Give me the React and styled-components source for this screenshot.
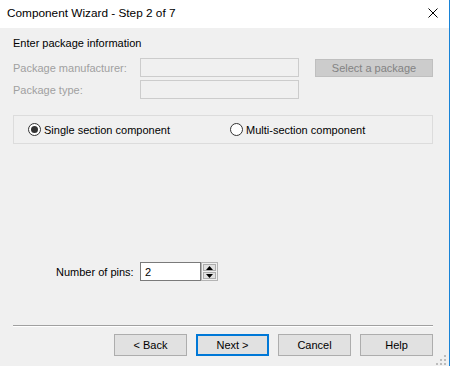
import React, { useState } from 'react'
import styled, { createGlobalStyle } from 'styled-components'

const GlobalStyle = createGlobalStyle`
    html, body {
        margin: 0;
        padding: 0;
        background: #ffffff;
    }
    body {
        font-family: 'Liberation Sans', Arial, sans-serif;
        font-size: 11px;
        color: #000000;
    }
`

const Window = styled.div`
    position: relative;
    width: 449px;
    height: 366px;
    border-right: 1px solid #1883d7;
    display: flex;
    flex-direction: column;
    background: #f0f0f0;
    overflow: hidden;
`
const TitleBar = styled.div`
    height: 28px;
    flex: none;
    background: #ffffff;
    display: flex;
    align-items: center;
    justify-content: space-between;
    padding: 0 11px 2px 7px;
    box-sizing: border-box;
`
const Title = styled.span`
    font-size: 11.8px;
    color: #000000;
`
const CloseButton = styled.button`
    border: 0;
    background: transparent;
    padding: 0;
    width: 10px;
    height: 10px;
    display: flex;
`
const Body = styled.div`
    flex: 1;
    display: flex;
    flex-direction: column;
    padding: 8px 16px 0 13px;
`
const Heading = styled.div`
    line-height: 15px;
    height: 15px;
`
const PackageGrid = styled.div`
    display: grid;
    grid-template-columns: 127px 175px 118px;
    row-gap: 3px;
    margin-top: 7px;
    align-items: center;
`
const DimLabel = styled.span`
    color: #a0a0a0;
`
const DisabledInput = styled.input`
    box-sizing: border-box;
    height: 19px;
    width: 159px;
    margin: 0;
    border: 1px solid #cccccc;
    background: #f0f0f0;
`
const DisabledButton = styled.button`
    box-sizing: border-box;
    height: 18px;
    width: 118px;
    margin: 0;
    padding: 0;
    border: 1px solid #bfbfbf;
    background: #cccccc;
    color: #838383;
    font-family: inherit;
    font-size: 11px;
    align-self: end;
`
const GroupBox = styled.div`
    margin-top: 16px;
    height: 29px;
    box-sizing: border-box;
    border: 1px solid #dcdcdc;
    display: grid;
    grid-template-columns: 202px 1fr;
    align-items: center;
    padding-left: 14px;
`
const RadioLabel = styled.label`
    display: flex;
    align-items: center;
    gap: 3px;
    cursor: default;
`
const RadioDot = styled.span`
    width: 13px;
    height: 13px;
    box-sizing: border-box;
    border-radius: 50%;
    border: 1px solid #333333;
    background: #ffffff;
    display: flex;
    align-items: center;
    justify-content: center;
    &::after {
        content: '';
        width: 7px;
        height: 7px;
        border-radius: 50%;
        background: ${p => (p.$checked ? '#333333' : 'transparent')};
    }
`
const PinsRow = styled.div`
    margin-top: 118px;
    display: flex;
    align-items: center;
    height: 19px;
`
const PinsLabel = styled.span`
    width: 84px;
    margin-left: 43px;
`
const NumberInput = styled.input`
    box-sizing: border-box;
    width: 61px;
    height: 19px;
    margin: 0;
    border: 1px solid #7a7a7a;
    background: #ffffff;
    padding: 0 0 0 4px;
    font-family: inherit;
    font-size: 11px;
    outline: none;
`
const Spinner = styled.div`
    box-sizing: border-box;
    width: 17px;
    height: 19px;
    border: 1px solid #b4b4b4;
    display: flex;
    flex-direction: column;
    padding: 1px;
    gap: 1px;
`
const SpinButton = styled.div`
    flex: 1;
    background: #e1e1e1;
    border: 1px solid #adadad;
    display: flex;
    align-items: center;
    justify-content: center;
`
const Separator = styled.div`
    margin-top: 44px;
    height: 0;
    border-top: 1px solid #a0a0a0;
    border-bottom: 1px solid #ffffff;
`
const ButtonRow = styled.div`
    margin-top: 7px;
    display: flex;
    justify-content: flex-end;
    gap: 9px;
`
const DialogButton = styled.button`
    box-sizing: border-box;
    width: 73px;
    height: 22px;
    margin: 0;
    padding: 0;
    background: #e1e1e1;
    border: ${p => (p.$default ? '2px solid #0078d7' : '1px solid #adadad')};
    font-family: inherit;
    font-size: 11px;
    color: #000000;
`
const Grip = styled.svg`
    position: absolute;
    right: 2px;
    bottom: 0;
`

function Radio({ checked, label, onSelect }) {
    return (
        <RadioLabel onClick={onSelect}>
            <RadioDot $checked={checked} />
            {label}
        </RadioLabel>
    )
}

export default function App() {
    const [mode, setMode] = useState('single')
    const [pins, setPins] = useState('2')

    return (
        <>
            <GlobalStyle />
            <Window>
                <TitleBar>
                    <Title>Component Wizard - Step 2 of 7</Title>
                    <CloseButton aria-label="Close">
                        <svg width="10" height="10" viewBox="0 0 10 10">
                            <path d="M0.5 0.5 L9.5 9.5 M9.5 0.5 L0.5 9.5" stroke="#000" strokeWidth="1" />
                        </svg>
                    </CloseButton>
                </TitleBar>
                <Body>
                    <Heading>Enter package information</Heading>
                    <PackageGrid>
                        <DimLabel>Package manufacturer:</DimLabel>
                        <DisabledInput disabled />
                        <DisabledButton disabled>Select a package</DisabledButton>
                        <DimLabel>Package type:</DimLabel>
                        <DisabledInput disabled />
                    </PackageGrid>
                    <GroupBox>
                        <Radio
                            checked={mode === 'single'}
                            label="Single section component"
                            onSelect={() => setMode('single')}
                        />
                        <Radio
                            checked={mode === 'multi'}
                            label="Multi-section component"
                            onSelect={() => setMode('multi')}
                        />
                    </GroupBox>
                    <PinsRow>
                        <PinsLabel>Number of pins:</PinsLabel>
                        <NumberInput value={pins} onChange={e => setPins(e.target.value)} />
                        <Spinner>
                            <SpinButton>
                                <svg width="7" height="4" viewBox="0 0 7 4">
                                    <path d="M3.5 0 L7 4 L0 4 Z" fill="#000" />
                                </svg>
                            </SpinButton>
                            <SpinButton>
                                <svg width="7" height="4" viewBox="0 0 7 4">
                                    <path d="M0 0 L7 0 L3.5 4 Z" fill="#000" />
                                </svg>
                            </SpinButton>
                        </Spinner>
                    </PinsRow>
                    <Separator />
                    <ButtonRow>
                        <DialogButton>&lt; Back</DialogButton>
                        <DialogButton $default>Next &gt;</DialogButton>
                        <DialogButton>Cancel</DialogButton>
                        <DialogButton>Help</DialogButton>
                    </ButtonRow>
                </Body>
                <Grip width="11" height="11" viewBox="0 0 11 11">
                    <rect x="8" y="0" width="2" height="2" fill="#bcbcbc" />
                    <rect x="4" y="4" width="2" height="2" fill="#bcbcbc" />
                    <rect x="8" y="4" width="2" height="2" fill="#bcbcbc" />
                    <rect x="0" y="8" width="2" height="2" fill="#bcbcbc" />
                    <rect x="4" y="8" width="2" height="2" fill="#bcbcbc" />
                    <rect x="8" y="8" width="2" height="2" fill="#bcbcbc" />
                </Grip>
            </Window>
        </>
    )
}
